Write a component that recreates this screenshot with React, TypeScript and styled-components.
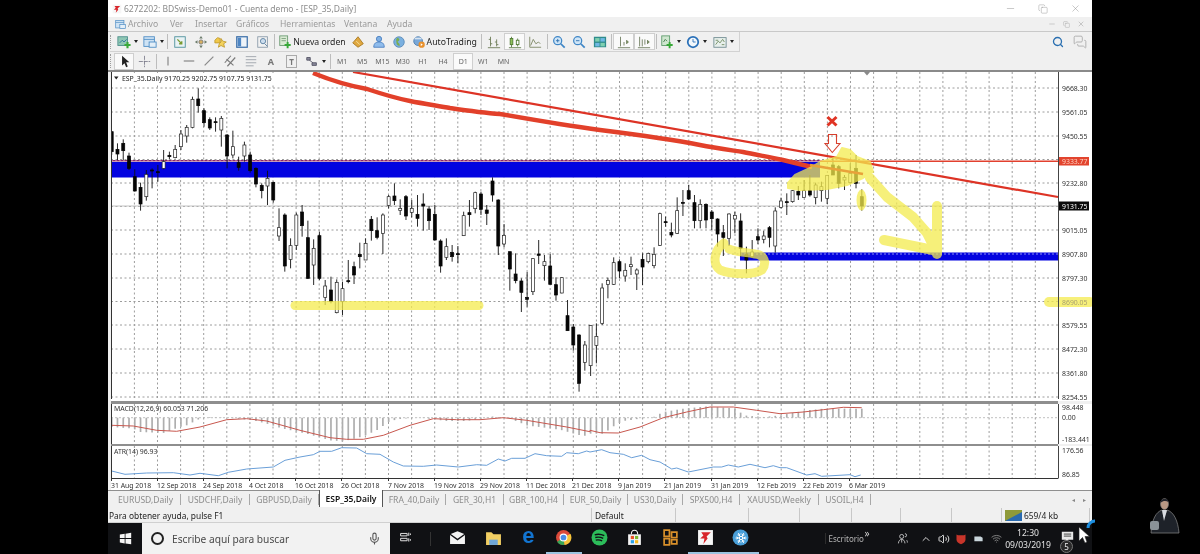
import { ReactNode } from 'react';
import styled, { createGlobalStyle } from 'styled-components';
import { Mic, Snowflake, Volume2, Wifi, ChevronUp, Search, MessagesSquare, Minus, X, Copy } from 'lucide-react';

const UI_FONT = '"Noto Sans", "DejaVu Sans", sans-serif';

const GlobalStyle = createGlobalStyle`
  html, body { margin: 0; padding: 0; background: #000; }
  * { box-sizing: border-box; }
`;

const Page = styled.div`
  width: 1200px;
  height: 554px;
  display: flex;
  overflow: hidden;
  position: relative;
  background: #000;
  font-family: ${UI_FONT};
  filter: blur(0.45px);
`;

const Gutter = styled.div`
  width: 108px;
  flex: none;
  display: flex;
  flex-direction: column;
  align-items: flex-end;
  justify-content: flex-end;
  padding: 0 19px 19px 0;
`;

const Window = styled.div`
  width: 984px;
  flex: none;
  display: flex;
  flex-direction: column;
  background: #f0f0f0;
`;

const TitleBar = styled.div`
  height: 17px;
  display: flex;
  align-items: center;
  gap: 2px;
  padding: 0 11px 0 4px;
  background: #fff;
`;

const TitleText = styled.span`
  flex: 1;
  font-size: 8.5px;
  color: #8b8b8b;
  white-space: nowrap;
`;

const WinControls = styled.div<{ $gap: number }>`
  display: flex;
  align-items: center;
  gap: ${({ $gap }) => $gap}px;
  color: ${({ $gap }) => ($gap > 20 ? '#8a8a8a' : '#a0a0a0')};
`;

const MenuBar = styled.div`
  height: 15px;
  display: flex;
  align-items: center;
  padding: 0 2px 0 7px;
  background: #f0f0f0;
  border-bottom: 1px solid #c9c9c9;
`;

const MenuIconSlot = styled.span`
  display: flex;
  margin-right: 2px;
`;

const MenuItem = styled.span<{ $w: number }>`
  width: ${({ $w }) => $w}px;
  font-size: 8.6px;
  color: #9a9a9a;
`;

const ToolRow = styled.div<{ $h: number }>`
  height: ${({ $h }) => $h}px;
  display: flex;
  align-items: center;
  padding-left: 2px;
  background: #f0f0f0;
`;

const ToolGroup = styled.div`
  height: 100%;
  display: flex;
  align-items: center;
  padding-right: 2px;
  border-right: 1px solid #d2d2d2;
  border-bottom: 1px solid #d2d2d2;
`;

const Grip = styled.div`
  width: 3px;
  height: 14px;
  margin-right: 1px;
  border-left: 1px dotted #9c9c9c;
`;

const Sep = styled.div<{ $m?: number }>`
  width: 1px;
  height: 15px;
  margin: 0 ${({ $m }) => $m ?? 2}px;
  background: #bdbdbd;
`;

const ToolButton = styled.div<{ $w?: number; $pressed?: boolean }>`
  width: ${({ $w }) => $w ?? 20.6}px;
  height: 17px;
  flex: none;
  display: flex;
  align-items: center;
  justify-content: center;
  gap: 1px;
  font-size: 8.7px;
  color: #1f1f1f;
  white-space: nowrap;
  background: ${({ $pressed }) => ($pressed ? '#fafafa' : 'transparent')};
  border: 1px solid ${({ $pressed }) => ($pressed ? '#cfcfcf' : 'transparent')};
`;

const Caret = styled.span`
  width: 0;
  height: 0;
  margin-left: 2px;
  border-left: 2px solid transparent;
  border-right: 2px solid transparent;
  border-top: 3px solid #222;
`;

const RightTools = styled.div`
  margin-left: auto;
  display: flex;
  align-items: center;
  gap: 9px;
  padding-right: 5px;
`;

const TimeframeButton = styled(ToolButton)`
  font-size: 7px;
  color: #666;
  width: 20.2px;
`;

const LetterTool = styled.b`
  color: #777;
  font-size: 9px;
`;

const BoxedLetterTool = styled(LetterTool)`
  border: 1px solid #aaa;
  padding: 0 2px;
  font-size: 8px;
`;

const ChartArea = styled.div`
  height: 420px;
  display: flex;
  flex-direction: column;
  padding-left: 3px;
  background: #f0f0f0;
  border-top: 2px solid #8a8a8a;
`;

const Pane = styled.svg<{ $h: number }>`
  display: block;
  width: 981px;
  height: ${({ $h }) => $h}px;
  flex: none;
  background: #fff;
  font-family: ${UI_FONT};
`;

const PaneDivider = styled.div<{ $h: number }>`
  height: ${({ $h }) => $h}px;
  width: 947px;
  flex: none;
  background: #8e8e8e;
`;

const TabStrip = styled.div`
  height: 18px;
  display: flex;
  align-items: stretch;
  padding: 1px 0 1px 3px;
  background: #f0f0f0;
  border-top: 1px solid #8f8f8f;
`;

const Tab = styled.div<{ $w: number; $active?: boolean }>`
  width: ${({ $w }) => $w}px;
  flex: none;
  display: flex;
  align-items: center;
  justify-content: center;
  font-size: 8.5px;
  font-weight: ${({ $active }) => ($active ? 600 : 400)};
  white-space: nowrap;
  color: ${({ $active }) => ($active ? '#111' : '#8c8c8c')};
  background: ${({ $active }) => ($active ? '#fff' : 'transparent')};
  border-right: 1px solid ${({ $active }) => ($active ? '#555' : '#a8a8a8')};
  border-left: ${({ $active }) => ($active ? '1px solid #555' : '0')};
  margin: ${({ $active }) => ($active ? '-2px 0 0' : '2px 0')};
`;

const TabArrows = styled.div`
  margin-left: auto;
  display: flex;
  align-items: center;
  gap: 8px;
  padding-right: 6px;
  font-size: 6px;
  color: #888;
`;

const StatusBar = styled.div`
  height: 15px;
  display: flex;
  align-items: stretch;
  background: #f0f0f0;
  border-bottom: 1px solid #d0d0d0;
`;

const StatusCell = styled.div<{ $w: number }>`
  width: ${({ $w }) => $w}px;
  flex: none;
  display: flex;
  align-items: center;
  gap: 2px;
  padding-left: ${({ $w }) => ($w > 300 ? 1 : 3)}px;
  font-size: 8.4px;
  color: #222;
  white-space: nowrap;
  border-right: 1px solid #c8c8c8;
`;

const Taskbar = styled.div`
  flex: 1;
  display: flex;
  align-items: stretch;
  background: #101114;
`;

const StartSlot = styled.div`
  width: 34px;
  flex: none;
  display: flex;
  align-items: center;
  justify-content: center;
`;

const SearchBox = styled.div`
  width: 248px;
  flex: none;
  display: flex;
  align-items: center;
  gap: 8px;
  padding: 0 9px;
  background: #f2f2f2;
  font-size: 10.2px;
  color: #4a4a4a;
`;

const SearchRing = styled.span`
  width: 13px;
  height: 13px;
  flex: none;
  border: 2px solid #222;
  border-radius: 50%;
`;

const SearchLabel = styled.span`
  flex: 1;
`;

const TaskSlot = styled.div<{ $w?: number; $running?: boolean }>`
  width: ${({ $w }) => $w ?? 35.4}px;
  flex: none;
  position: relative;
  display: flex;
  align-items: center;
  justify-content: center;
  color: #f2f2f2;
  border-bottom: 2px solid ${({ $running }) => ($running ? '#9cc4e0' : 'transparent')};
`;

const SnowOverlay = styled.span`
  position: absolute;
  display: flex;
`;

const EdgeGlyph = styled.span`
  font: bold 22px 'Liberation Sans', sans-serif;
  line-height: 20px;
  margin-top: -3px;
  color: #1275d2;
`;

const TaskDivider = styled.div`
  width: 20px;
  flex: none;
  display: flex;
  align-items: center;
  &::before {
    content: '';
    width: 1px;
    height: 14px;
    margin-left: 10px;
    background: #333;
  }
`;

const Tray = styled.div`
  margin-left: auto;
  display: flex;
  align-items: center;
  color: #d8d8d8;
  padding-right: 14px;
`;

const DeskLabel = styled.span`
  width: 40px;
  font-size: 8px;
  color: #b5b5b5;
  border-left: 1px solid #2d2d2d;
  padding-left: 3px;
`;

const TrayMore = styled.span`
  width: 23px;
  margin-top: -12px;
  font-size: 10px;
  color: #ccc;
`;

const TrayItem = styled.span<{ $w?: number }>`
  width: ${({ $w }) => $w ?? 17.5}px;
  flex: none;
  display: flex;
  justify-content: center;
  align-items: center;
`;

const Clock = styled.div`
  width: 46px;
  flex: none;
  display: flex;
  flex-direction: column;
  align-items: center;
  font-size: 8.6px;
  line-height: 12px;
  color: #e4e4e4;
`;

const Notification = styled.div`
  width: 22px;
  margin-left: 5px;
  position: relative;
  display: flex;
  justify-content: center;
  margin-top: -5px;
`;

const NotificationBadge = styled.span`
  position: absolute;
  left: 4px;
  top: 10px;
  width: 13px;
  height: 13px;
  display: flex;
  align-items: center;
  justify-content: center;
  font-size: 8px;
  color: #eee;
  background: #2a2a2a;
  border: 1px solid #777;
  border-radius: 50%;
`;

const CursorLayer = styled.svg`
  position: absolute;
  left: 1074px;
  top: 518px;
  width: 24px;
  height: 26px;
`;

type IconName = keyof typeof ICONS;

const ICONS = {
  newChart: <><rect x="1" y="2" width="11" height="10" fill="#8fc7b4" stroke="#4c8f8a" /><path d="M3 9l3-3 2 2 3-3" stroke="#2a6f9a" fill="none" /><path d="M12 8v7M8.500 11.500h7" stroke="#3aa83a" strokeWidth="2.400" /></>,
  profiles: <><rect x="1" y="2" width="12" height="11" fill="#cfe3f4" stroke="#4d8cc4" /><path d="M1 5h12" stroke="#4d8cc4" /><rect x="7" y="8" width="8" height="6" fill="#e4eff8" stroke="#4d8cc4" /></>,
  market: <><rect x="2" y="2" width="12" height="12" fill="#e8f2f4" stroke="#4a8f9a" /><path d="M5 5l5 5M7 10h3V7" stroke="#7a9a30" strokeWidth="1.500" fill="none" /></>,
  navigator: <><path d="M8 1l2 3H6zM8 15l-2-3h4zM1 8l3-2v4zM15 8l-3 2V6z" fill="#6a7a6a" /><circle cx="8" cy="8" r="2.400" fill="#d8b060" stroke="#777" /></>,
  folders: <><path d="M1 6l3-3 3 1v5H1z" fill="#f0c84a" stroke="#c09a30" /><path d="M8 4l2 3 4 1-3 2 1 4-4-2-3 2 1-4 2-2z" fill="#f3d25c" stroke="#c09a30" /></>,
  terminal: <><rect x="2" y="2" width="12" height="12" fill="#eef3f8" stroke="#3b6fa8" strokeWidth="1.400" /><rect x="3" y="3" width="4" height="10" fill="#4d86c4" /></>,
  tester: <><rect x="2" y="2" width="11" height="12" fill="#f2f2f2" stroke="#8a9aa8" /><circle cx="8" cy="7" r="3" fill="#cde" stroke="#5a7f9f" /><path d="M10 10l3 3" stroke="#5a7f9f" /></>,
  order: <><rect x="2" y="1" width="9" height="11" fill="#d9ead3" stroke="#6a9a72" /><path d="M4 4h5M4 6.500h5" stroke="#7aa07a" /><path d="M11 8v7M7.500 11.500h7" stroke="#38a838" strokeWidth="2.200" /></>,
  expert: <><path d="M2 9l6-7 6 8-6 4z" fill="#e0a840" stroke="#a87820" /><path d="M6 7l4 4" stroke="#f6e2a0" /></>,
  people: <><circle cx="8" cy="4.500" r="3" fill="#7fb0e4" stroke="#4a7fc0" /><path d="M2 14c0-5 3-6 6-6s6 1 6 6z" fill="#8fbcec" stroke="#4a7fc0" /></>,
  globe: <><circle cx="8" cy="8" r="6" fill="#7ab0e0" stroke="#5a8ab8" /><path d="M6 3c3 1 3 3 1 4s2 2 2 5c-3 1-4-2-4-4s-1-3 1-5z" fill="#7aae50" /></>,
  auto: <><circle cx="7" cy="7" r="5" fill="#7aa8d8" stroke="#4f7fb0" /><path d="M3 4h8" stroke="#d8e4f0" strokeWidth="2" /><circle cx="11" cy="11" r="3.600" fill="#e8902c" /><path d="M10 9.500v3l2.400-1.500z" fill="#fff" /></>,
  bars: <path d="M4 2v11M2 5h2M4 10h2M11 5v8M9 8h2M11 11h2M1 14.500h14" stroke="#6b7a55" fill="none" />,
  candles: <><path d="M4 2v12M11 4v9M1 14.500h14" stroke="#5a7a45" /><rect x="2.500" y="4" width="3" height="7" fill="#8fc15a" stroke="#4e7a30" /><rect x="9.500" y="6" width="3" height="5" fill="#fff" stroke="#4e7a30" /></>,
  line: <path d="M2 2v12h13M3 12l3-7 3 5 3-2 2 2" stroke="#7a8560" fill="none" />,
  zoomIn: <><circle cx="6.500" cy="6.500" r="4.600" fill="#cfe5f7" stroke="#3f86c6" strokeWidth="1.400" /><path d="M4.500 6.500h4M6.500 4.500v4" stroke="#2e70ae" /><path d="M10 10l4.500 4.500" stroke="#3f86c6" strokeWidth="2" /></>,
  zoomOut: <><circle cx="6.500" cy="6.500" r="4.600" fill="#cfe5f7" stroke="#3f86c6" strokeWidth="1.400" /><path d="M4.500 6.500h4" stroke="#2e70ae" /><path d="M10 10l4.500 4.500" stroke="#3f86c6" strokeWidth="2" /></>,
  tile: <><rect x="1" y="2" width="14" height="12" fill="#2f8c8c" /><rect x="2.500" y="3.500" width="5" height="4" fill="#7fd0b0" /><rect x="8.500" y="3.500" width="5" height="4" fill="#70b8e4" /><rect x="2.500" y="9" width="5" height="4" fill="#70b8e4" /><rect x="8.500" y="9" width="5" height="4" fill="#7fd0b0" /></>,
  scroll: <path d="M4 2v11M1 14.500h14M8 8v4M11 6l2 2-2 2z" stroke="#6c7a5c" fill="#7a9a4a" />,
  shift: <path d="M3 2v11M6 5v8M1 14.500h14M9 5v6M12 6l2 2-2 2z" stroke="#6c7a5c" fill="#7a9a4a" />,
  indicator: <><rect x="2" y="1" width="9" height="11" fill="#cfe6cf" stroke="#5c9a6a" /><path d="M4 8l2-3 2 2" stroke="#3f7a4a" fill="none" /><path d="M11 8v7M7.500 11.500h7" stroke="#38a838" strokeWidth="2.200" /></>,
  clock: <><circle cx="8" cy="8" r="6" fill="#f2f7fb" stroke="#2a70b8" strokeWidth="2" /><path d="M8 4.500V8h3" stroke="#2a70b8" fill="none" /></>,
  template: <><rect x="1" y="3" width="14" height="11" fill="#e8f0ec" stroke="#6f8a90" /><path d="M3 11l3-4 2 2 3-4 2 3M3 6h3M10 11h3" stroke="#6f8a60" fill="none" /></>,
  cursor: <path d="M5 1v12l3-3 2 5 2-1-2-5h4z" fill="#222" />,
  cross: <path d="M8 1v14M1 8h14" stroke="#778" strokeDasharray="5 1" />,
  vline: <path d="M8 3v10" stroke="#8a8a8a" strokeWidth="1.400" />,
  hline: <path d="M2 8h12" stroke="#8a8a8a" strokeWidth="1.400" />,
  dline: <path d="M3 13L13 3" stroke="#8a8a8a" strokeWidth="1.400" />,
  channel: <path d="M2 10l7-8M5 14l9-10M4 6l8 7" stroke="#7a7a7a" strokeWidth="1.300" fill="none" />,
  fibo: <path d="M2 3h12M2 6.500h12M2 10h12M2 13.500h9" stroke="#9aa0a8" fill="none" />,
  shapes: <path d="M2 4h4v3H2zM8 10h5v3H8zM5 7l4 3" stroke="#556" fill="#889" />,
  winLogo: <path d="M1 3l6-1v5.500H1zM8 2l7-1v6.500H8zM1 8.500h6V14l-6-1zM8 8.500h7V15l-7-1z" fill="#f4f4f4" />,
  taskView: <path d="M2 3h8v3H2zM2 9h8v3H2zM12 2v4M12 9v4M14 3v2M14 10v2" stroke="#e4e4e4" fill="none" strokeWidth="1.200" />,
  mail: <><path d="M1 5l7-3 7 3v9H1z" fill="#f4f4f4" /><path d="M1 5l7 5 7-5" fill="none" stroke="#101114" strokeWidth="1.300" /></>,
  folder: <><path d="M1 3h5l2 2h7v10H1z" fill="#f2cf63" /><rect x="4" y="10" width="8" height="5" fill="#6fa6d8" /></>,
  chrome: <><circle cx="8" cy="8" r="7" fill="#dc4a3a" /><path d="M8 8L2 12a7 7 0 0 0 7 3z" fill="#3aa757" /><path d="M8 8l1 7a7 7 0 0 0 5.500-10.500z" fill="#f7c53a" /><circle cx="8" cy="8" r="3.200" fill="#4a8ce8" stroke="#fff" /></>,
  spotify: <><circle cx="8" cy="8" r="7.500" fill="#2cbd5a" /><path d="M3.500 5.500c3-1 6-.7 9 .8M4 8c3-.7 5-.4 7.500.8M4.500 10.500c2-.5 4-.3 6 .7" stroke="#101114" strokeWidth="1.300" fill="none" /></>,
  store: <><path d="M2 5h12v10H2z" fill="#f4f4f4" /><path d="M5 5c0-5 6-5 6 0" stroke="#f4f4f4" fill="none" /><rect x="4.500" y="6.500" width="3" height="3" fill="#e8532b" /><rect x="8.500" y="6.500" width="3" height="3" fill="#7cb82e" /><rect x="4.500" y="10.500" width="3" height="3" fill="#28a0e8" /><rect x="8.500" y="10.500" width="3" height="3" fill="#f7b81c" /></>,
  gold: <path d="M2 1h5v6H2zM9 3h5v5H9zM2 9h5v6H2zM9 10h5v4H9z" fill="none" stroke="#d9902a" strokeWidth="1.600" />,
  broker: <><rect x="1" y="1" width="14" height="14" fill="#f6f6f6" /><path d="M4 3h9l-4 4 1 2-4 5 1-5H3l3-3z" fill="#d8252a" /></>,
  snow: <circle cx="8" cy="8" r="7.500" fill="#4a9fd8" />,
  shield: <path d="M2 2l2 1h8l2-1v7c0 3-3 5-6 6-3-1-6-3-6-6z" fill="#c8352a" />,
  battery: <path d="M2 5h9l3 2v5H2z" fill="#c9d6dc" />,
  person: <path d="M7 13V9M3 14c0-3 2-5 4-5s4 2 4 5M7 3a2.500 2.500 0 1 0 0 5 2.500 2.500 0 0 0 0-5zM11 2a2 2 0 0 1 0 4M13 10c1 1 1 2 1 3" stroke="#d8d8d8" fill="none" />,
  notify: <><path d="M1 2h14v10H9l-3 3v-3H1z" fill="#e8e8e8" /><path d="M3.500 5h9M3.500 7.500h9" stroke="#222" /></>,
};

const Icon = ({ name, size = 14 }: { name: IconName; size?: number }) => (
  <svg width={size} height={size} viewBox="0 0 16 16">
    {ICONS[name]}
  </svg>
);

// 3x coordinates read off the reference: [high, body top, body bottom, low, white]
const section = (base: number, rows: number[][]) =>
  rows.map(([hi, top, bot, lo, white]) => ({
    hi: base + hi / 3,
    top: base + top / 3,
    bot: base + bot / 3,
    lo: base + lo / 3,
    white: white === 1,
  }));

const CANDLES = [
  ...section(80, [
    [155,155,215,225,0],[190,208,222,240,0],[178,190,212,240,0],[218,228,265,270,0],[268,290,333,335,0],
    [308,322,372,392,0],[270,283,350,362,1],[265,270,272,325,0],[255,275,278,305,0],[210,245,265,268,1],
    [215,226,230,238,0],[195,208,233,235,1],[150,162,200,210,1],[135,142,168,188,1],[50,58,142,145,1],
    [25,57,77,98,0],[85,92,128,140,0],[112,119,144,150,0],[112,125,127,155,0],[108,115,150,200,1],
    [162,165,228,265,0],[152,200,225,235,1],[230,248,262,272,0],[185,195,228,245,1],[215,225,272,278,0],
    [262,265,312,322,0],[310,316,332,355,0],[272,295,318,375,1],[305,307,360,368,0],[385,443,468,483,1],
    [400,405,558,575,0],[475,497,538,565,1],[398,405,496,510,1],[375,396,437,470,0],[422,473,595,597,0],
    [478,505,555,615,1],[455,467,595,600,0],[600,618,652,675,1],[590,630,665,670,0],[598,607,698,700,1],
    [605,626,665,705,1],[540,602,605,610,0],[545,560,585,612,0],[488,523,530,565,0],[475,490,540,540,1],
    [408,418,452,482,0],[412,452,472,478,0],[400,405,460,522,1],[345,350,376,385,1],[310,348,362,375,0],
    [358,385,391,405,1],[345,350,408,420,0],[360,385,397,412,1],[345,403,415,440,0],[340,372,378,452,0],
    [378,387,422,450,0],[375,403,480,482,0],[478,483,558,578,0],[475,500,532,540,1],[495,517,530,545,0],
    [498,521,524,550,0],[395,407,467,468,1],[360,398,404,440,0],[335,338,386,400,1],[335,342,388,405,0],
    [375,390,400,435,0],[292,303,345,365,0],
  ]),
  ...section(170, [
    [88,90,228,255,0],[162,196,222,232,1],[245,245,297,362,0],[250,312,332,340,0],[325,333,367,426,0],
    [306,382,388,410,0],[265,266,365,375,1],[210,252,256,282,0],[255,275,287,332,1],[252,288,343,343,0],
    [322,344,375,392,0],[322,323,369,370,1],[390,437,482,482,0],[462,471,525,542,0],[493,495,640,665,0],
    [513,525,577,602,1],[465,466,587,618,1],[460,499,526,580,1],[340,354,460,465,1],[323,331,343,385,1],
    [262,278,343,345,1],[268,275,303,325,0],[280,301,318,335,1],[260,284,290,315,1],[295,300,312,360,1],
    [250,268,291,345,0],[248,250,275,280,1],[232,253,287,295,1],[128,131,226,228,1],[140,155,158,170,0],
    [158,187,195,202,0],[82,122,190,192,1],[60,97,100,138,0],[45,62,87,90,0],[75,98,152,175,0],
    [88,103,152,175,1],[100,103,150,175,0],[120,126,146,180,0],
  ]),
  ...section(100, [
    [355,357,402,440,0],[375,398,412,468,0],[340,342,415,438,1],[335,346,357,400,1],[340,363,445,470,0],
    [440,464,480,520,0],[420,456,470,475,1],[385,410,420,432,0],[392,408,418,430,1],[378,383,412,442,0],
    [322,333,438,458,1],[293,303,322,325,1],[280,305,308,345,0],[270,272,305,308,1],[258,274,285,300,0],
    [240,272,292,292,1],[225,272,285,290,0],[248,255,293,313,1],[245,260,272,305,1],[225,226,295,312,1],
    [168,195,225,225,0],[195,200,250,265,0],[225,232,240,270,1],[190,220,248,250,1],[165,205,250,265,0],
    [268,290,318,332,0],
  ]),
];

const candleX = (i: number) => 111.7 + 5.77 * i;

const GRID_X = Array.from({ length: 41 }, (_, i) => 111.3 + 23.1 * i);
const PRICES: [string, number][] = [
  ['9668.30', 88], ['9561.05', 112], ['9450.55', 136], ['9232.80', 183], ['9015.05', 230],
  ['8907.80', 254], ['8797.30', 278], ['8579.55', 325], ['8472.30', 349], ['8361.80', 373], ['8254.55', 397],
];
const GRID_Y = [88, 112, 136, 159.5, 183, 206.5, 230, 254, 278, 301.5, 325, 349, 373, 397];

const DATES: [string, number][] = [
  ['31 Aug 2018', 111], ['12 Sep 2018', 157], ['24 Sep 2018', 203], ['4 Oct 2018', 249], ['16 Oct 2018', 295],
  ['26 Oct 2018', 341], ['7 Nov 2018', 388], ['19 Nov 2018', 434], ['29 Nov 2018', 480], ['11 Dec 2018', 526],
  ['21 Dec 2018', 572], ['9 Jan 2019', 618], ['21 Jan 2019', 664], ['31 Jan 2019', 711], ['12 Feb 2019', 757],
  ['22 Feb 2019', 803], ['6 Mar 2019', 849],
];

type Pt = [number, number];

const fromCrop = (ox: number, oy: number, pts: number[][]): Pt[] =>
  pts.map(([x, y]) => [ox + x / 3, oy + y / 3]);

const toPath = (pts: Pt[]) => pts.map(([x, y], i) => `${i ? 'L' : 'M'}${x.toFixed(1)} ${y.toFixed(1)}`).join(' ');

const interp = (pts: Pt[], x: number) => {
  if (x <= pts[0][0]) return pts[0][1];
  for (let i = 1; i < pts.length; i++) {
    if (x <= pts[i][0]) {
      const [x0, y0] = pts[i - 1];
      const [x1, y1] = pts[i];
      return y0 + ((y1 - y0) * (x - x0)) / (x1 - x0);
    }
  }
  return pts[pts.length - 1][1];
};

const MACD_BARS = [
  ...fromCrop(100, 395, [[35,90],[100,95],[120,105],[190,108],[240,90],[260,85],[300,65],[330,60],[380,62],[460,70],[500,80],[550,95],[620,110],[690,130],[730,133],[790,118],[830,100],[870,72],[900,66],[960,62],[1040,72],[1100,72],[1180,58],[1230,65],[1280,85],[1380,98],[1450,118]]),
  ...fromCrop(590, 395, [[0,110],[40,110],[75,85],[100,72],[150,65],[190,60],[220,45],[280,35],[350,28],[440,35],[460,55],[520,60],[570,55],[650,40],[700,35],[815,35]]),
];
const MACD_SIGNAL = [
  ...fromCrop(100, 395, [[35,85],[100,87],[170,100],[230,103],[300,90],[380,68],[440,65],[500,72],[600,100],[690,122],[740,127],[790,127],[850,115],[930,85],[1000,65],[1070,68],[1140,68],[1210,62],[1280,70],[1400,90],[1470,104]]),
  ...fromCrop(590, 395, [[0,100],[30,107],[85,108],[150,90],[220,62],[290,45],[360,30],[430,30],[500,40],[570,50],[640,45],[700,38],[760,31],[815,32]]),
];
const ATR_LINE = [
  ...fromCrop(100, 395, [[35,222],[75,232],[140,228],[220,227],[270,234],[300,229],[355,236],[385,226],[440,216],[520,210],[555,190],[600,180],[640,173],[660,163],[695,163],[725,152],[770,153],[800,170],[840,172],[880,195],[910,207],[970,208],[1010,204],[1075,210],[1130,203],[1160,205],[1195,186],[1215,192],[1235,184],[1275,184],[1305,170],[1340,176],[1385,178],[1400,167],[1435,170],[1460,162]]),
  ...fromCrop(590, 395, [[0,165],[35,158],[60,167],[100,172],[125,182],[155,175],[180,188],[210,195],[245,216],[260,213],[295,225],[370,210],[395,210],[415,204],[445,210],[480,202],[525,212],[550,206],[570,212],[590,212],[650,234],[675,230],[695,238],[780,233],[795,239],[812,234]]),
];

const GridV = ({ y0, y1 }: { y0: number; y1: number }) => (
  <g stroke="#9c9c9c" strokeWidth="1" strokeDasharray="2 2.5">
    {GRID_X.map((x) => (
      <line key={x} x1={x} x2={x} y1={y0} y2={y1} />
    ))}
  </g>
);

const AxisLine = ({ y0, y1 }: { y0: number; y1: number }) => (
  <>
    <rect x={111} y={y0} width={1} height={y1 - y0} fill="#333" />
    <rect x={1058} y={y0} width={1} height={y1 - y0} fill="#444" />
  </>
);

const PriceText = ({ y, color = '#333', children }: { y: number; color?: string; children: ReactNode }) => (
  <text x={1062} y={y + 2.5} fontSize="6.9" fill={color}>
    {children}
  </text>
);

const MainChart = () => (
  <Pane $h={329} viewBox="111 72 981 329">
    <GridV y0={72} y1={399} />
    <g stroke="#9c9c9c" strokeWidth="1" strokeDasharray="2 2.5">
      {GRID_Y.map((y) => (
        <line key={y} x1={111} x2={1058} y1={y} y2={y} />
      ))}
    </g>
    <rect x={111} y={162} width={709} height={15.5} fill="#0303e0" />
    <rect x={740} y={252.5} width={318} height={8} fill="#0303e0" />
    <line x1={740} x2={1058} y1={254} y2={254} stroke="#aeb4f4" strokeWidth="0.8" strokeDasharray="2 2" />
    <line x1={111} x2={820} y1={160.8} y2={160.8} stroke="#8a2a6a" strokeWidth="1.6" />
    <line x1={111} x2={820} y1={160.8} y2={160.8} stroke="#f4c0c0" strokeWidth="0.6" strokeDasharray="2 2" />
    <line x1={111} x2={1058} y1={206} y2={206} stroke="#c4c4c4" strokeWidth="1.2" />

    {CANDLES.map((c, i) => {
      const x = candleX(i);
      const h = Math.max(c.bot - c.top, 1);
      return (
        <g key={i}>
          <line x1={x} x2={x} y1={c.hi} y2={c.lo} stroke="#111" strokeWidth="0.9" />
          <rect
            x={x - 1.5}
            y={c.top}
            width={3}
            height={h}
            fill={c.white ? '#fff' : '#050505'}
            stroke={c.white ? '#222' : '#050505'}
            strokeWidth="0.7"
          />
        </g>
      );
    })}

    <line x1={820} x2={1058} y1={161.3} y2={161.3} stroke="#e2402e" strokeWidth="1.6" />
    <path d="M353 72L1058 197" stroke="#dd3325" strokeWidth="2.2" fill="none" />
    <path
      d="M313 73C330 80 350 86 367 89C385 95 400 99 410 101C425 104 440 106 450 108C470 111 485 113 500 114C540 121 570 126 600 130C640 135 670 139 700 145C715 148 730 150 743 152C757 155 770 157 783 160C795 163 803 165 812 167"
      stroke="#e2402a"
      strokeWidth="4.4"
      fill="none"
    />

    <g opacity="0.75" stroke="#f4eb4e" fill="none" strokeLinecap="round" strokeLinejoin="round">
      <path d="M295 305.5H479" strokeWidth="9" />
      <path d="M724 243C714 250 712 264 720 270C732 275 754 275 762 270C767 263 765 255 755 254C745 252 735 252 729 249" strokeWidth="9" />
      <path
        d="M788 183L795 175L810 168L820 162L837 157L842 148L850 150L857 157L870 162L873 172L863 178L847 185L827 189L800 190L788 188Z"
        fill="#f4eb4e"
        strokeWidth="2"
      />
      <ellipse cx={861.5} cy={200} rx={5} ry={10.5} fill="#f4eb4e" stroke="none" />
      <path d="M870 178L887 197L900 207L913 217L927 233L937 253" strokeWidth="10" />
      <path d="M884 240L933 250" strokeWidth="10" />
      <path d="M937 206V254" strokeWidth="10" />
      <path d="M1049 302H1090" strokeWidth="10" />
    </g>
    <path d="M810 165L863 174" stroke="#e8a23a" strokeWidth="2.6" fill="none" />
    <path d="M828.5 134.5H836.5V143.5H840L832.3 152.5L825 143.5H828.5Z" fill="none" stroke="#d8402e" strokeWidth="1.1" />
    <path d="M827.5 117L836.5 125.5M836.5 117L827.5 125.5" stroke="#e03424" strokeWidth="3" />

    <AxisLine y0={72} y1={399} />
    <path d="M864 72h6l-3 3.500z" fill="#8a8a8a" />

    {PRICES.map(([label, y]) => (
      <PriceText key={label} y={y}>{label}</PriceText>
    ))}
    <PriceText y={302} color="#a8a070">8690.05</PriceText>
    <rect x={1059} y={157} width={30} height={8.5} fill="#e2442e" />
    <PriceText y={161} color="#ffd0c0">9333.77</PriceText>
    <rect x={1059} y={201.5} width={30} height={9} fill="#0a0a0a" />
    <PriceText y={206} color="#fff">9131.75</PriceText>

    <rect x={112} y={73} width={163} height={10} fill="#fff" />
    <path d="M114 76.5h4.5l-2.250 3z" fill="#222" />
    <text x={122} y={81} fontSize="6.9" fill="#222">ESP_35.Daily  9170.25 9202.75 9107.75 9131.75</text>
  </Pane>
);

const MacdPane = () => (
  <Pane $h={40} viewBox="111 402 981 40">
    <GridV y0={402} y1={442} />
    <line x1={111} x2={1058} y1={415.7} y2={415.7} stroke="#b0b0b0" strokeWidth="0.8" strokeDasharray="2 2" />
    {CANDLES.map((_, i) => {
      const x = candleX(i);
      const y = interp(MACD_BARS, x);
      return <line key={i} x1={x} x2={x} y1={415.7} y2={y} stroke="#aeaeae" strokeWidth="1.7" />;
    })}
    <path d={toPath(MACD_SIGNAL)} stroke="#c8574e" strokeWidth="1" fill="none" />
    <AxisLine y0={402} y1={442} />
    <text x={114} y={409} fontSize="6.9" fill="#333">MACD(12,26,9) 60.053 71.206</text>
    <PriceText y={405.5}>98.448</PriceText>
    <PriceText y={415.5}>0.00</PriceText>
    <PriceText y={437}>-183.441</PriceText>
  </Pane>
);

const AtrPane = () => (
  <Pane $h={33} viewBox="111 444 981 33">
    <GridV y0={444} y1={477} />
    <path d={toPath(ATR_LINE)} stroke="#6a9fd8" strokeWidth="1" fill="none" />
    <AxisLine y0={444} y1={476.5} />
    <line x1={111} x2={1058} y1={476.5} y2={476.5} stroke="#333" strokeWidth="1" />
    <text x={114} y={452} fontSize="6.9" fill="#333">ATR(14) 96.93</text>
    <PriceText y={448}>176.56</PriceText>
    <PriceText y={472}>86.85</PriceText>
  </Pane>
);

const Dates = () => (
  <Pane $h={12} viewBox="111 477 981 12">
    {DATES.map(([label, x]) => (
      <g key={label}>
        <line x1={x + 0.5} x2={x + 0.5} y1={477} y2={479} stroke="#333" />
        <text x={x} y={486} fontSize="6.9" fill="#333">{label}</text>
      </g>
    ))}
  </Pane>
);

const MENU: [string, number][] = [
  ['Archivo', 42], ['Ver', 25], ['Insertar', 41], ['Gráficos', 44], ['Herramientas', 64], ['Ventana', 43], ['Ayuda', 40],
];
const TIMEFRAMES = ['M1', 'M5', 'M15', 'M30', 'H1', 'H4', 'D1', 'W1', 'MN'];
const TABS: [string, number][] = [
  ['EURUSD,Daily', 70], ['USDCHF,Daily', 69], ['GBPUSD,Daily', 69], ['ESP_35,Daily', 64], ['FRA_40,Daily', 63],
  ['GER_30,H1', 58], ['GBR_100,H4', 60], ['EUR_50,Daily', 64], ['US30,Daily', 55], ['SPX500,H4', 57],
  ['XAUUSD,Weekly', 79], ['USOIL,H4', 52],
];
const STATUS_WIDTHS = [484, 84, 73, 51, 52, 49, 51, 50];

const App = () => (
  <>
    <GlobalStyle />
    <Page>
      <Gutter />
      <Window>
        <TitleBar>
          <Icon name="broker" size={10} />
          <TitleText>6272202: BDSwiss-Demo01 - Cuenta demo - [ESP_35,Daily]</TitleText>
          <WinControls $gap={22}>
            <Minus size={11} strokeWidth={1} />
            <Copy size={10} strokeWidth={1} />
            <X size={11} strokeWidth={1} />
          </WinControls>
        </TitleBar>

        <MenuBar>
          <MenuIconSlot><Icon name="profiles" size={11} /></MenuIconSlot>
          {MENU.map(([label, w]) => (
            <MenuItem key={label} $w={w}>{label}</MenuItem>
          ))}
          <RightTools>
            <WinControls $gap={7}>
              <Minus size={8} strokeWidth={1.4} />
              <Copy size={7} strokeWidth={1.4} />
              <X size={8} strokeWidth={1.6} />
            </WinControls>
          </RightTools>
        </MenuBar>

        <ToolRow $h={20}>
          <ToolGroup>
            <Grip />
            <ToolButton $w={27}><Icon name="newChart" /><Caret /></ToolButton>
            <ToolButton $w={24}><Icon name="profiles" /><Caret /></ToolButton>
            <Sep />
            <ToolButton><Icon name="market" /></ToolButton>
            <ToolButton><Icon name="navigator" /></ToolButton>
            <ToolButton><Icon name="folders" /></ToolButton>
            <ToolButton><Icon name="terminal" /></ToolButton>
            <ToolButton><Icon name="tester" /></ToolButton>
            <Sep $m={1} />
            <ToolButton $w={72}><Icon name="order" />Nueva orden</ToolButton>
            <ToolButton><Icon name="expert" /></ToolButton>
            <ToolButton><Icon name="people" /></ToolButton>
            <ToolButton><Icon name="globe" /></ToolButton>
            <ToolButton $w={69}><Icon name="auto" />AutoTrading</ToolButton>
            <Sep />
            <ToolButton><Icon name="bars" /></ToolButton>
            <ToolButton $pressed><Icon name="candles" /></ToolButton>
            <ToolButton><Icon name="line" /></ToolButton>
            <Sep $m={1} />
            <ToolButton><Icon name="zoomIn" /></ToolButton>
            <ToolButton><Icon name="zoomOut" /></ToolButton>
            <ToolButton><Icon name="tile" /></ToolButton>
            <Sep $m={1} />
            <ToolButton $pressed><Icon name="scroll" /></ToolButton>
            <ToolButton $pressed><Icon name="shift" /></ToolButton>
            <Sep $m={1} />
            <ToolButton $w={26}><Icon name="indicator" /><Caret /></ToolButton>
            <ToolButton $w={26}><Icon name="clock" /><Caret /></ToolButton>
            <ToolButton $w={27}><Icon name="template" /><Caret /></ToolButton>
          </ToolGroup>
          <RightTools>
            <Search size={12} color="#2a6fb0" strokeWidth={2.6} />
            <MessagesSquare size={14} color="#9a9a9a" strokeWidth={1.2} />
          </RightTools>
        </ToolRow>

        <ToolRow $h={18}>
          <Grip />
          <ToolButton $pressed $w={20}><Icon name="cursor" size={13} /></ToolButton>
          <ToolButton $w={21}><Icon name="cross" size={13} /></ToolButton>
          <Sep $m={1} />
          <ToolButton><Icon name="vline" /></ToolButton>
          <ToolButton><Icon name="hline" /></ToolButton>
          <ToolButton><Icon name="dline" /></ToolButton>
          <ToolButton><Icon name="channel" /></ToolButton>
          <ToolButton><Icon name="fibo" /></ToolButton>
          <ToolButton $w={20}><LetterTool>A</LetterTool></ToolButton>
          <ToolButton $w={21}><BoxedLetterTool>T</BoxedLetterTool></ToolButton>
          <ToolButton $w={27}><Icon name="shapes" /><Caret /></ToolButton>
          <Sep $m={1} />
          {TIMEFRAMES.map((tf) => (
            <TimeframeButton key={tf} $pressed={tf === 'D1'}>{tf}</TimeframeButton>
          ))}
        </ToolRow>

        <ChartArea>
          <MainChart />
          <PaneDivider $h={2.5} />
          <MacdPane />
          <PaneDivider $h={2} />
          <AtrPane />
          <Dates />
        </ChartArea>

        <TabStrip>
          {TABS.map(([label, w]) => (
            <Tab key={label} $w={w} $active={label === 'ESP_35,Daily'}>{label}</Tab>
          ))}
          <TabArrows>
            <span>◂</span>
            <span>▸</span>
          </TabArrows>
        </TabStrip>

        <StatusBar>
          {STATUS_WIDTHS.map((w, i) => (
            <StatusCell key={i} $w={w}>
              {i === 0 && 'Para obtener ayuda, pulse F1'}
              {i === 1 && 'Default'}
            </StatusCell>
          ))}
          <StatusCell $w={88}>
            <svg width="17" height="11" viewBox="0 0 17 11">
              <rect width="17" height="11" fill="#8f9a3a" />
              <path d="M0 11L17 2V11Z" fill="#2a6ab0" />
            </svg>
            659/4 kb
          </StatusCell>
        </StatusBar>

        <Taskbar>
          <StartSlot><Icon name="winLogo" size={13} /></StartSlot>
          <SearchBox>
            <SearchRing />
            <SearchLabel>Escribe aquí para buscar</SearchLabel>
            <Mic size={13} color="#555" />
          </SearchBox>
          <TaskSlot $w={30}><Icon name="taskView" size={13} /></TaskSlot>
          <TaskDivider />
          <TaskSlot><Icon name="mail" size={17} /></TaskSlot>
          <TaskSlot><Icon name="folder" size={17} /></TaskSlot>
          <TaskSlot><EdgeGlyph>e</EdgeGlyph></TaskSlot>
          <TaskSlot $running><Icon name="chrome" size={17} /></TaskSlot>
          <TaskSlot><Icon name="spotify" size={17} /></TaskSlot>
          <TaskSlot><Icon name="store" size={17} /></TaskSlot>
          <TaskSlot><Icon name="gold" size={17} /></TaskSlot>
          <TaskSlot $running><Icon name="broker" size={17} /></TaskSlot>
          <TaskSlot $running>
            <Icon name="snow" size={17} />
            <SnowOverlay><Snowflake size={12} color="#fff" /></SnowOverlay>
          </TaskSlot>
          <Tray>
            <DeskLabel>Escritorio</DeskLabel>
            <TrayMore>»</TrayMore>
            <TrayItem $w={30}><Icon name="person" size={13} /></TrayItem>
            <TrayItem><ChevronUp size={12} /></TrayItem>
            <TrayItem><Volume2 size={12} /></TrayItem>
            <TrayItem><Icon name="shield" size={12} /></TrayItem>
            <TrayItem><Icon name="battery" size={11} /></TrayItem>
            <TrayItem><Wifi size={11} color="#888" /></TrayItem>
            <Clock>
              <span>12:30</span>
              <span>09/03/2019</span>
            </Clock>
            <Notification>
              <Icon name="notify" size={13} />
              <NotificationBadge>5</NotificationBadge>
            </Notification>
          </Tray>
        </Taskbar>
      </Window>
      <Gutter>
        <svg width="34" height="38" viewBox="0 0 34 38">
          <path d="M4 36C5 22 9 15 15 13L17 20L20 13C27 15 31 24 32 36Z" fill="#1e2229" stroke="#8a8a8a" strokeWidth="0.7" />
          <path d="M15 13L17 24L20 13Z" fill="#d8dbe0" />
          <ellipse cx="17.5" cy="7" rx="4" ry="5.5" fill="#b89884" stroke="#777" strokeWidth="0.6" />
          <path d="M13.5 6C13 1 21 0 21.5 5C19 3.5 16 3.5 13.5 6Z" fill="#20232a" />
          <rect x="3" y="24" width="9" height="9" rx="2" fill="#8a9298" />
        </svg>
      </Gutter>
      <CursorLayer viewBox="0 0 24 26">
        <path d="M14 10A7 7 0 0 1 21 3" stroke="#1d8fe0" strokeWidth="3" fill="none" />
        <path d="M5 9V23L8.5 19.5L11 25L13 24L11 18.5H15.5Z" fill="#fff" stroke="#222" strokeWidth="0.6" />
      </CursorLayer>
    </Page>
  </>
);

export default App;
